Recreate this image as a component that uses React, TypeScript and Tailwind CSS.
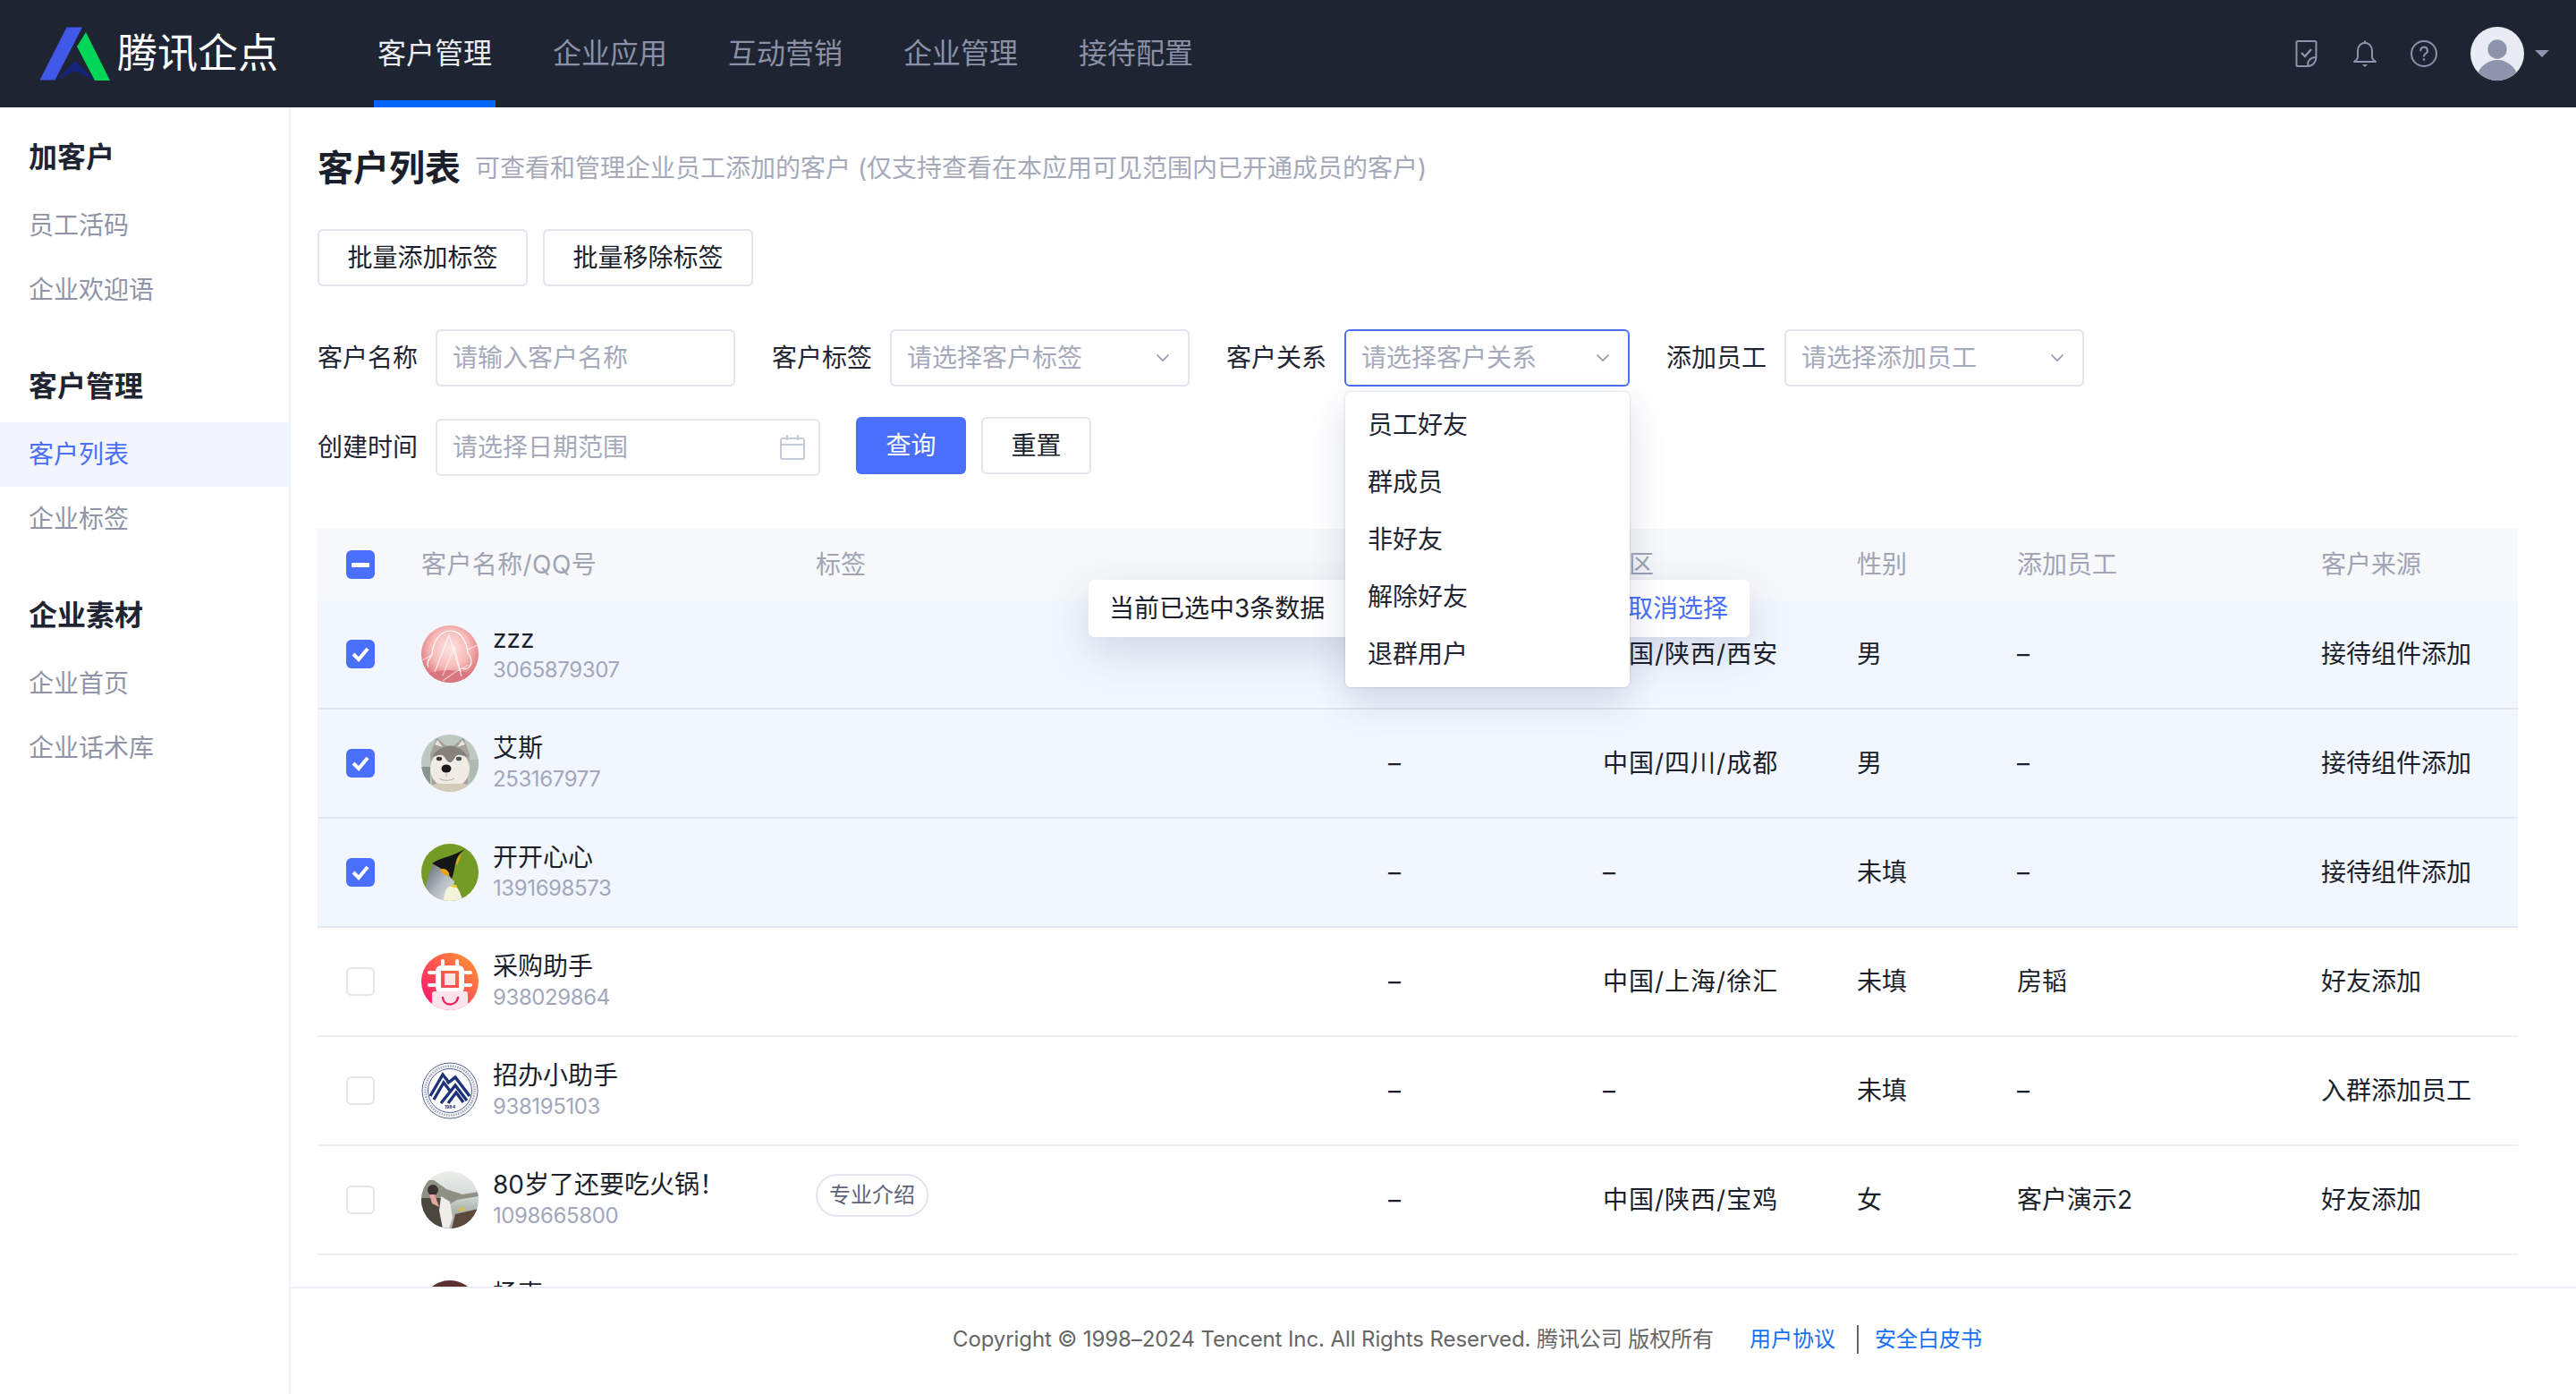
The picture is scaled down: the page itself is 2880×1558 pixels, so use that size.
import type { ReactNode } from 'react';

const rowGrid = 'grid grid-cols-[116px_441px_640px_241px_283px_179px_340px_220px] items-center';

function Logo() {
  return (
    <svg viewBox="0 0 80 60" className="w-[80px] h-[60px] shrink-0">
      <path d="M30.5 1.5 48 1.5 17.5 60.5H0.5Z" fill="#4059e8" transform="translate(0 -1)" />
      <path d="M18 60 40 38 62 60 40 49Z" fill="#16237a" />
      <path d="M52 6 79 60H62L42 22Z" fill="#00d758" />
    </svg>
  );
}

function DocIcon() {
  return (
    <svg viewBox="0 0 36 36" fill="none" stroke="#8e94ab" strokeWidth="2" className="w-[36px] h-[36px]">
      <path d="M9 4h19a1.5 1.5 0 0 1 1.5 1.5V22c0 5-4 10-9 10H9a1.5 1.5 0 0 1-1.5-1.5v-25A1.5 1.5 0 0 1 9 4z" />
      <path d="M20.5 32c-1.5-6 3-10 9-10" />
      <path d="M13 17l4 4 7-8" strokeWidth="2.4" />
    </svg>
  );
}

function BellIcon() {
  return (
    <svg viewBox="0 0 36 36" fill="none" stroke="#8e94ab" strokeWidth="2" className="w-[36px] h-[36px]">
      <path d="M18 6c-5 0-8 4-8 9v7c0 2-2 3.5-4 5h24c-2-1.500-4-3-4-5v-7c0-5-3-9-8-9z" strokeLinejoin="round" />
      <path d="M18 3.500V6" />
      <path d="M15 30h6l-3 3z" fill="#8e94ab" stroke="none" />
    </svg>
  );
}

function HelpIcon() {
  return (
    <svg viewBox="0 0 36 36" fill="none" stroke="#8e94ab" strokeWidth="2" className="w-[36px] h-[36px]">
      <circle cx="18" cy="18" r="14" />
      <path d="M14.300 14.500a3.800 3.800 0 1 1 5.600 3.300c-1.200.7-1.900 1.400-1.900 2.900" strokeLinecap="round" />
      <circle cx="18" cy="24.500" r="1.300" fill="#8e94ab" stroke="none" />
    </svg>
  );
}

function UserAvatar() {
  return (
    <div className="w-[60px] h-[60px] rounded-full overflow-hidden bg-[#e9ecf2]">
      <svg viewBox="0 0 60 60" className="w-full h-full">
        <circle cx="30" cy="25" r="10.700" fill="#8e94ab" />
        <ellipse cx="30" cy="62" rx="24" ry="25" fill="#8e94ab" />
      </svg>
    </div>
  );
}

function Chevron() {
  return (
    <svg viewBox="0 0 16 10" fill="none" stroke="#8f94a8" strokeWidth="1.600" className="w-[16px] h-[10px] shrink-0">
      <path d="M1.500 1.500 8 8l6.500-6.500" />
    </svg>
  );
}

function CalendarIcon() {
  return (
    <svg viewBox="0 0 28 28" fill="none" stroke="#c5cad8" strokeWidth="2" className="w-[28px] h-[28px] shrink-0 -mr-[5px]">
      <rect x="1" y="4" width="26" height="23" rx="2" />
      <path d="M1 11h26M8 0v6M20 0v6" />
    </svg>
  );
}

function Frame({ children }: { children: ReactNode }) {
  return <div className="w-[64px] h-[64px] rounded-full overflow-hidden shrink-0">{children}</div>;
}

function AvatarSketch() {
  return (
    <Frame>
      <svg viewBox="0 0 64 64" className="w-full h-full">
        <defs>
          <radialGradient id="sk" cx="50%" cy="40%" r="62%">
            <stop offset="0%" stopColor="#fde4e2" />
            <stop offset="55%" stopColor="#f7b9b7" />
            <stop offset="100%" stopColor="#d4686c" />
          </radialGradient>
        </defs>
        <rect width="64" height="64" fill="url(#sk)" />
        <ellipse cx="30" cy="57" rx="26" ry="7" fill="#d97680" />
        <g fill="none" stroke="#fff" strokeWidth="1.200">
          <path d="M8 47c-3-6 2-11 4-15 1-12 7-25 20-26 12 0 19 12 20 25 3 4 6 10 2 15-2 3-6 3-8 2" />
          <path d="M15 52 31 11l14 46" opacity="0.75" />
          <path d="M24 56 37 24l7 28M24 62l14-10 15-8" opacity="0.6" />
          <path d="M1 39l11-6M52 27l11-5" opacity="0.6" />
        </g>
      </svg>
    </Frame>
  );
}

function AvatarHusky() {
  return (
    <Frame>
      <svg viewBox="0 0 64 64" className="w-full h-full">
        <rect width="64" height="64" fill="#bcc8c0" />
        <rect y="36" width="10" height="28" fill="#88958e" />
        <rect x="54" y="28" width="10" height="36" fill="#aeb9b2" />
        <path d="M10 22 17 3l10 9h10l10-9 7 19-2 34H12z" fill="#a5a19c" />
        <path d="M15 11l3-5 6 8zM49 11l-3-5-6 8z" fill="#ece6df" />
        <ellipse cx="32" cy="38" rx="22" ry="22" fill="#f0ece5" />
        <path d="M12 25c5-9 13-12 20-12s15 3 20 12c-4 0-8-3-11-2-4 1-5 8-9 8s-5-7-9-8c-3-1-7 2-11 2z" fill="#86817c" />
        <ellipse cx="20" cy="27" rx="3.200" ry="2.300" fill="#3a3a3a" />
        <ellipse cx="42" cy="27" rx="3.200" ry="2.300" fill="#4b5358" />
        <ellipse cx="28" cy="38" rx="5.500" ry="4.500" fill="#191717" />
        <path d="M28 43v4M20 49c5 3 12 3 17 0" stroke="#b5aea6" fill="none" />
        <path d="M6 60c8-7 16-5 26-5s20-2 26 5v4H6z" fill="#d3cbba" />
      </svg>
    </Frame>
  );
}

function AvatarPenguin() {
  return (
    <Frame>
      <svg viewBox="0 0 64 64" className="w-full h-full">
        <defs>
          <linearGradient id="pg" x1="0" y1="0" x2="1" y2="1">
            <stop offset="0%" stopColor="#5f6770" />
            <stop offset="55%" stopColor="#b3bcc3" />
            <stop offset="100%" stopColor="#e2e5e6" />
          </linearGradient>
        </defs>
        <rect width="64" height="64" fill="#759b27" />
        <path d="M5 47c2-10 5-18 9-25l23 20-5 22H12z" fill="url(#pg)" />
        <path d="M12 22c6-4 12-6 19-8 6-2 12-5 18-8-5 4-9 8-10 13-2 6-2 13-5 20-3-6-12-12-22-17z" fill="#14161a" />
        <path d="M39 23c0-5 3-9 6-12-2 5-3 9-5 13z" fill="#e9a416" />
        <path d="M21 29c3-2 7-1 9 2 2 3 1 5 1 5-4-1-8-2-10-7z" fill="#eea412" />
        <path d="M25 64c0-7 2-14 6-16 3-1 6-2 8-1 3 5 6 10 7 17z" fill="#f4f3dc" />
        <path d="M32 47c2-1 5-1 7-1l1 3c-3 0-6-1-8-2z" fill="#f2cc27" />
      </svg>
    </Frame>
  );
}

function AvatarChip() {
  return (
    <Frame>
      <svg viewBox="0 0 64 64" className="w-full h-full">
        <defs>
          <linearGradient id="ch" x1="0" y1="1" x2="1" y2="0">
            <stop offset="0%" stopColor="#ff0a72" />
            <stop offset="100%" stopColor="#ff9e30" />
          </linearGradient>
        </defs>
        <rect width="64" height="64" fill="url(#ch)" />
        <path d="M24 15v-6M40 15v-6M15 22H9M15 36H9M49 22h6M49 36h6" stroke="#fff" strokeWidth="4" strokeLinecap="round" />
        <rect x="19" y="17" width="26" height="25" rx="3" fill="none" stroke="#fff" strokeWidth="6" />
        <rect x="26" y="23" width="12" height="13" fill="#fff" opacity="0.85" />
        <path d="M12 46a3 3 0 0 1 3-3h34a3 3 0 0 1 3 3v18H12z" fill="#fde4ec" />
        <path d="M24 50c1 10 15 10 17 0" fill="none" stroke="#f5205f" strokeWidth="2.500" strokeLinecap="round" />
      </svg>
    </Frame>
  );
}

function AvatarBadge() {
  return (
    <Frame>
      <svg viewBox="0 0 64 64" className="w-full h-full">
        <rect width="64" height="64" fill="#fff" />
        <circle cx="32" cy="32" r="31" fill="none" stroke="#27356f" strokeWidth="0.800" />
        <circle cx="32" cy="32" r="27.500" fill="none" stroke="#27356f" strokeWidth="2.500" strokeDasharray="1.500 1.200" opacity="0.45" />
        <circle cx="32" cy="32" r="24.500" fill="none" stroke="#1d3278" strokeWidth="0.800" />
        <g fill="none" stroke="#1d3278" strokeWidth="3.400">
          <path d="M10 38 24 14l7 9" />
          <path d="M14 42 25 23l7 9" />
          <path d="M29 24l9-7 16 21" />
          <path d="M22 46l16-20 13 17" />
          <path d="M30 46l9-12 8 11" />
        </g>
        <text x="32" y="52" fontSize="5" textAnchor="middle" fill="#1d3278" fontWeight="700">1984</text>
      </svg>
    </Frame>
  );
}

function AvatarPhoto() {
  return (
    <Frame>
      <svg viewBox="0 0 64 64" className="w-full h-full">
        <defs>
          <linearGradient id="sea" x1="0" y1="0" x2="0" y2="1">
            <stop offset="0%" stopColor="#eceeea" />
            <stop offset="40%" stopColor="#d5dcda" />
            <stop offset="70%" stopColor="#aab2aa" />
          </linearGradient>
        </defs>
        <rect width="64" height="64" fill="url(#sea)" />
        <path d="M0 10h14l14 10 18 6 18-3v5L40 32 20 44 0 40z" fill="#8d9082" />
        <path d="M0 30h22l8 34H0z" fill="#4b473f" />
        <path d="M34 64l4-16 26-6v22z" fill="#5d4a3c" />
        <path d="M40 44l6-5 4 6z" fill="#d8bd54" />
        <circle cx="13" cy="21" r="6" fill="#3a3230" />
        <path d="M15 26l5 14-8-4-3-10z" fill="#e4a59c" />
        <path d="M22 28l10 6 3 18-4 12H24l-4-20z" fill="#f0ece8" />
      </svg>
    </Frame>
  );
}

function AvatarDark() {
  return <div className="w-[64px] h-[64px] rounded-full bg-[#5a2f30] shrink-0" />;
}

function CheckBox({ state }: { state: 'on' | 'off' | 'some' }) {
  if (state === 'off') return <div className="w-[32px] h-[32px] rounded-[6px] border-2 border-[#e3e5eb] bg-white" />;
  return (
    <div className="w-[32px] h-[32px] rounded-[6px] bg-[#4a6ffa] flex items-center justify-center">
      {state === 'some' ? (
        <div className="w-[20px] h-[5px] rounded-[1px] bg-white" />
      ) : (
        <svg viewBox="0 0 32 32" fill="none" stroke="#fff" strokeWidth="4" className="w-[32px] h-[32px]">
          <path d="M8 16l6 6 10-12" />
        </svg>
      )}
    </div>
  );
}

const customers = [
  { name: 'zzz', qq: '3065879307', avatar: <AvatarSketch />, tag: '', region: '中国/陕西/西安', gender: '男', staff: '–', source: '接待组件添加', selected: true },
  { name: '艾斯', qq: '253167977', avatar: <AvatarHusky />, tag: '', region: '中国/四川/成都', gender: '男', staff: '–', source: '接待组件添加', selected: true },
  { name: '开开心心', qq: '1391698573', avatar: <AvatarPenguin />, tag: '', region: '–', gender: '未填', staff: '–', source: '接待组件添加', selected: true },
  { name: '采购助手', qq: '938029864', avatar: <AvatarChip />, tag: '', region: '中国/上海/徐汇', gender: '未填', staff: '房韬', source: '好友添加', selected: false },
  { name: '招办小助手', qq: '938195103', avatar: <AvatarBadge />, tag: '', region: '–', gender: '未填', staff: '–', source: '入群添加员工', selected: false },
  { name: '80岁了还要吃火锅！', qq: '1098665800', avatar: <AvatarPhoto />, tag: '专业介绍', region: '中国/陕西/宝鸡', gender: '女', staff: '客户演示2', source: '好友添加', selected: false },
  // only the top of this row shows above the footer
  { name: '杨声', qq: '', avatar: <AvatarDark />, tag: '', region: '', gender: '', staff: '', source: '', selected: false },
];

const sideMenu = [
  { title: '加客户', items: ['员工活码', '企业欢迎语'] },
  { title: '客户管理', items: ['客户列表', '企业标签'] },
  { title: '企业素材', items: ['企业首页', '企业话术库'] },
];

function Field({ width, focused, children }: { width: string; focused?: boolean; children: ReactNode }) {
  return (
    <div className={`${width} h-[64px] rounded-[6px] border-2 ${focused ? 'border-[#4a6ffa]' : 'border-[#e3e5eb]'} flex items-center justify-between pl-[17px] pr-[20px] text-[28px] text-[#a5a9ba]`}>
      {children}
    </div>
  );
}

function FormItem({ label, children }: { label: string; children: ReactNode }) {
  return (
    <div className="flex items-center gap-[20px]">
      <span className="w-[112px] text-[28px] text-[#1f2433] whitespace-nowrap">{label}</span>
      {children}
    </div>
  );
}

export default function App() {
  return (
    <div className="h-[1558px] overflow-hidden flex flex-col bg-white text-[#1b1f2b] font-[Inter,'Noto_Sans_CJK_SC',sans-serif]">
      {/* top nav */}
      <header className="h-[120px] shrink-0 bg-[#1e2431] flex items-center pl-[44px] pr-[30px]">
        <Logo />
        <span className="ml-[7px] w-[180px] text-[45px] text-white whitespace-nowrap">腾讯企点</span>
        <nav className="ml-[111px] h-full flex gap-[68px] text-[32px] text-[#8a90a5]">
          <a className="relative h-full flex items-center text-[#eceef3]">
            客户管理
            <span className="absolute bottom-0 -left-[4px] -right-[4px] h-[8px] bg-[#0265f5]" />
          </a>
          <a className="h-full flex items-center">企业应用</a>
          <a className="h-full flex items-center">互动营销</a>
          <a className="h-full flex items-center">企业管理</a>
          <a className="h-full flex items-center">接待配置</a>
        </nav>
        <div className="ml-auto flex items-center gap-[30px]">
          <DocIcon />
          <BellIcon />
          <HelpIcon />
        </div>
        <div className="ml-[34px]">
          <UserAvatar />
        </div>
        <div className="ml-[12px] w-0 h-0 border-x-[8px] border-x-transparent border-t-[8px] border-t-[#8e94ab]" />
      </header>

      <div className="flex-1 flex min-h-0">
        {/* side menu */}
        <aside className="w-[325px] shrink-0 border-r-2 border-[#f0f1f5] pt-[27px]">
          {sideMenu.map((group, i) => (
            <div key={group.title} className={i > 0 ? 'mt-[43px]' : ''}>
              <h3 className="h-[56px] mb-[13px] pl-[32px] pt-[2px] flex items-center text-[32px] font-semibold text-[#1f2433]">{group.title}</h3>
              {group.items.map((item) => (
                <div
                  key={item}
                  className={`h-[72px] pl-[32px] flex items-center text-[28px] ${item === '客户列表' ? 'bg-[#f2f5fb] text-[#4a6ffa]' : 'text-[#8f94a8]'}`}
                >
                  {item}
                </div>
              ))}
            </div>
          ))}
        </aside>

        <main className="flex-1 min-w-0 flex flex-col">
          <div className="flex-1 min-h-0 overflow-hidden pl-[30px] pr-[65px] pt-[40px]">
            <div className="h-[56px] flex items-center">
              <h1 className="text-[40px] font-semibold text-[#1b1f2b]">客户列表</h1>
              <p className="ml-[16px] text-[28px] text-[#a5a9ba] whitespace-nowrap">可查看和管理企业员工添加的客户 (仅支持查看在本应用可见范围内已开通成员的客户)</p>
            </div>

            <div className="mt-[40px] flex gap-[17px]">
              <button className="w-[235px] h-[64px] rounded-[6px] border-2 border-[#e3e5eb] text-[28px]">批量添加标签</button>
              <button className="w-[235px] h-[64px] rounded-[6px] border-2 border-[#e3e5eb] text-[28px]">批量移除标签</button>
            </div>

            {/* filters */}
            <div className="mt-[48px] flex gap-[41px]">
              <FormItem label="客户名称">
                <Field width="w-[335px]">请输入客户名称</Field>
              </FormItem>
              <FormItem label="客户标签">
                <Field width="w-[335px]">
                  请选择客户标签
                  <Chevron />
                </Field>
              </FormItem>
              <FormItem label="客户关系">
                <div className="relative">
                  <Field width="w-[319px]" focused>
                    请选择客户关系
                    <Chevron />
                  </Field>
                  <ul className="absolute z-20 top-[70px] left-[1px] w-[318px] h-[330px] pt-[5px] rounded-[6px] bg-white text-[28px] text-[#1f2433] shadow-[0_0_3px_rgba(30,40,80,0.18),0_16px_40px_rgba(30,50,100,0.16)]">
                    {['员工好友', '群成员', '非好友', '解除好友', '退群用户'].map((opt) => (
                      <li key={opt} className="h-[64px] pl-[25px] flex items-center">{opt}</li>
                    ))}
                  </ul>
                </div>
              </FormItem>
              <FormItem label="添加员工">
                <Field width="w-[335px]">
                  请选择添加员工
                  <Chevron />
                </Field>
              </FormItem>
            </div>

            <div className="mt-[34px] flex items-start">
              <div className="mt-[2px]">
                <FormItem label="创建时间">
                  <Field width="w-[430px]">
                    请选择日期范围
                    <CalendarIcon />
                  </Field>
                </FormItem>
              </div>
              <button className="ml-[40px] w-[123px] h-[64px] rounded-[6px] bg-[#4a6ffa] text-white text-[28px]">查询</button>
              <button className="ml-[17px] w-[123px] h-[64px] rounded-[6px] border-2 border-[#e3e5eb] text-[28px]">重置</button>
            </div>

            {/* table */}
            <div className="relative mt-[59px]">
              <div className={`${rowGrid} h-[80px] bg-[#f7f8fa] text-[28px] text-[#a0a4b5]`}>
                <div className="pl-[32px]"><CheckBox state="some" /></div>
                <div className="tracking-[0.4px]">客户名称/QQ号</div>
                <div>标签</div>
                <div />
                <div>地区</div>
                <div>性别</div>
                <div>添加员工</div>
                <div>客户来源</div>
              </div>
              {customers.map((c) => (
                <div
                  key={c.name}
                  className={`${rowGrid} h-[122px] border-b-2 text-[28px] ${c.selected ? 'bg-[#f2f6fe] border-[#e3e7f3]' : 'border-[#eeeff3]'}`}
                >
                  <div className="pl-[32px]"><CheckBox state={c.selected ? 'on' : 'off'} /></div>
                  <div className="flex items-center gap-[16px]">
                    {c.avatar}
                    <div>
                      <div className="h-[36px] leading-[36px] whitespace-nowrap">{c.name}</div>
                      <div className="h-[34px] leading-[34px] text-[24px] tracking-[-0.4px] text-[#a2a7bb]">{c.qq}</div>
                    </div>
                  </div>
                  <div>
                    {c.tag && (
                      <span className="mb-[10px] w-[126px] h-[48px] rounded-full border-2 border-[#e3e5eb] flex items-center justify-center text-[24px] text-[#5f6479]">{c.tag}</span>
                    )}
                  </div>
                  <div>{c.qq ? '–' : ''}</div>
                  <div className="-ml-[1px] tracking-[1px]">{c.region}</div>
                  <div>{c.gender}</div>
                  <div>{c.staff}</div>
                  <div className="whitespace-nowrap">{c.source}</div>
                </div>
              ))}
              {/* selection bar floating over the table */}
              <div className="absolute z-10 top-[57px] left-[862px] w-[739px] h-[64px] pl-[23px] pr-[24px] flex items-center justify-between rounded-[6px] bg-white text-[28px] shadow-[0_16px_48px_rgba(30,50,100,0.16)]">
                <span>当前已选中3条数据</span>
                <span className="text-[#4a6ffa]">取消选择</span>
              </div>
            </div>
          </div>

          <footer className="h-[120px] shrink-0 border-t-2 border-[#eceef3] flex items-center pl-[740px] pb-[4px] text-[24px] text-[#666]">
            <span className="tracking-[-0.1px]">Copyright © 1998–2024 Tencent Inc. All Rights Reserved. 腾讯公司 版权所有</span>
            <a className="ml-[40px] text-[#1670f5]">用户协议</a>
            <span className="ml-[24px] mr-[18px] w-[2px] h-[32px] bg-[#666]" />
            <a className="text-[#1670f5]">安全白皮书</a>
          </footer>
        </main>
      </div>
    </div>
  );
}
